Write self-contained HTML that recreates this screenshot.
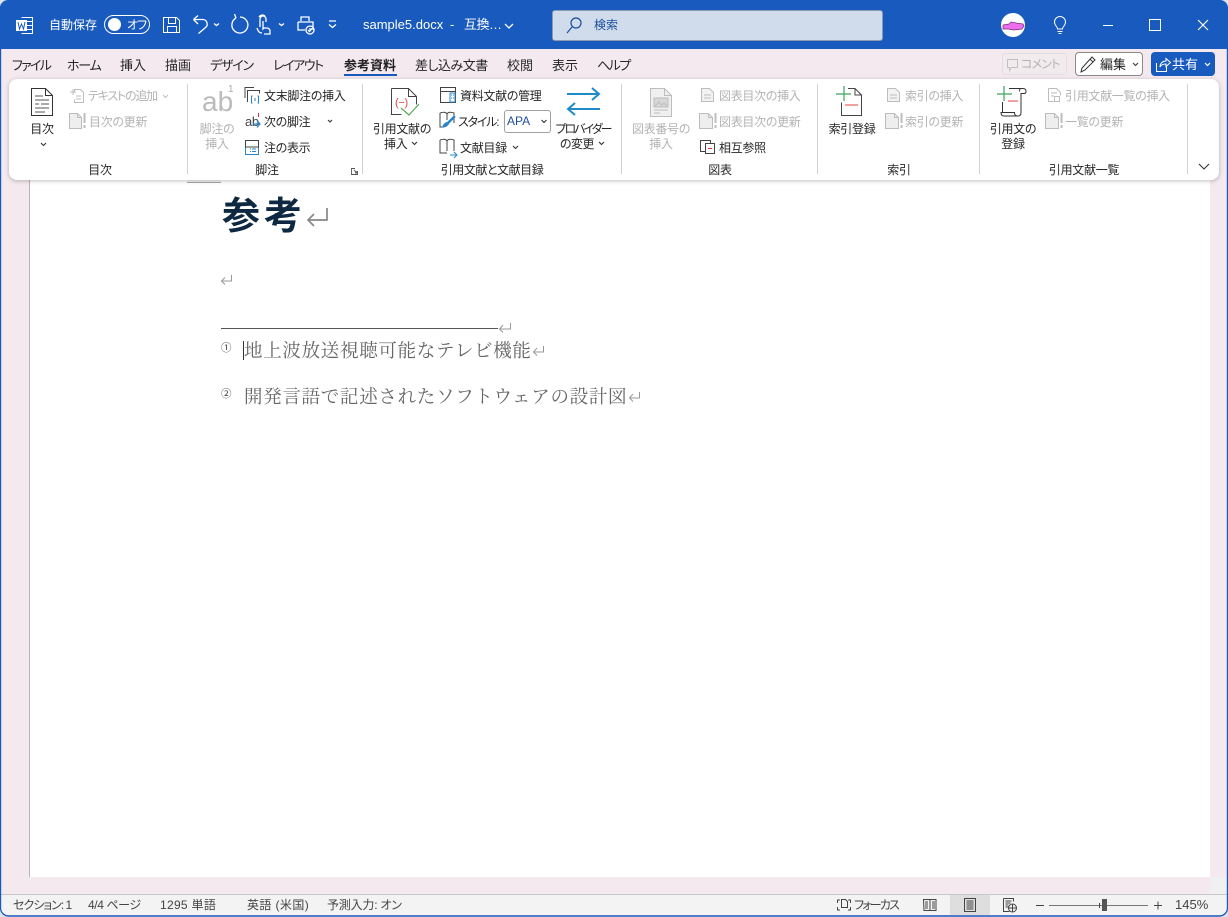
<!DOCTYPE html>
<html lang="ja"><head><meta charset="utf-8"><title>sample5.docx</title>
<style>
html,body{margin:0;padding:0;width:1228px;height:917px;overflow:hidden;background:#dfe3e8}
#w{position:absolute;left:0;top:0;width:1228px;height:917px;background:#f3e9ef;border-radius:8px;overflow:hidden;font-family:"Liberation Sans","Noto Sans CJK JP",sans-serif;font-size:12px;color:#262626;font-feature-settings:"palt";letter-spacing:-.3px}
#w div,#w span{position:absolute}
span{white-space:nowrap;line-height:16px}
.c{transform:translateX(-50%)}
.g{color:#b3b3b3}
.tab{font-size:13px;top:58px;letter-spacing:0}
.st{top:897px;font-size:12px;color:#444;letter-spacing:0}
.doc{font-family:"Noto Serif CJK SC","Noto Serif CJK JP",serif;font-size:18.5px;letter-spacing:.7px;color:#666;font-feature-settings:normal;line-height:22px}
svg{position:absolute;left:0;top:0}
</style></head><body>
<div id="w">
<div style="left:0;top:0;width:1228px;height:49px;background:#185abd"></div>
<div style="left:30px;top:180px;width:1180px;height:697px;background:#fff;border-left:1px solid #b9b5b7;margin-left:-1px"></div>
<div style="left:1210px;top:877px;width:18px;height:17px;background:#f0f0f0"></div>
<div style="left:187px;top:176px;width:34px;height:6px;background:#f4f4f4;border-bottom:1px solid #a8a8a8"></div>
<div style="left:9px;top:79px;width:1210px;height:101px;background:#fff;border-radius:8px;box-shadow:0 1px 4px rgba(0,0,0,.25)"></div>
<div style="left:0;top:894px;width:1228px;height:21px;background:#f3f3f3;border-top:1px solid #c8c8c8;box-sizing:border-box"></div>
<div style="left:950px;top:895px;width:40px;height:20px;background:#dedede"></div>
<div style="left:552px;top:10px;width:331px;height:31px;box-sizing:border-box;background:#d0dcec;border:1px solid #8c9ab0;border-radius:3px"></div>
<div style="left:104px;top:15px;width:46px;height:19px;box-sizing:border-box;border:1px solid #fff;border-radius:10px"></div>
<div style="left:108px;top:18px;width:13px;height:13px;background:#fff;border-radius:50%"></div>
<div style="left:1002px;top:53px;width:65px;height:22px;box-sizing:border-box;background:#f1ebee;border:1px solid #e3dde0;border-radius:3px"></div>
<div style="left:1075px;top:52px;width:68px;height:24px;box-sizing:border-box;background:#fff;border:1px solid #8a8a8a;border-radius:4px"></div>
<div style="left:1151px;top:52px;width:64px;height:24px;background:#185abd;border-radius:4px"></div>
<div style="left:344px;top:74px;width:53px;height:2px;background:#185abd"></div>
<div style="left:504px;top:110px;width:47px;height:23px;box-sizing:border-box;background:#fff;border:1px solid #a0a0a0;border-radius:3px"></div>
<div style="left:221px;top:328px;width:277px;height:1px;background:#555"></div>
<div style="left:243px;top:341px;width:1px;height:19px;background:#333"></div>

<!-- title bar -->
<span style="left:49px;top:17px;color:#fff;letter-spacing:0">自動保存</span>
<span style="left:127px;top:17px;color:#fff;letter-spacing:-1px">オフ</span>
<span style="left:363px;top:17px;color:#fff;font-size:13px;font-feature-settings:normal;letter-spacing:0">sample5.docx</span>
<span style="left:450px;top:17px;color:#fff;font-size:13px;letter-spacing:0">-</span>
<span style="left:464px;top:17px;color:#fff;font-size:13px;font-feature-settings:normal;letter-spacing:-.5px">互換…</span>
<span style="left:594px;top:17px;color:#1a4e9c;letter-spacing:0">検索</span>
<!-- tabs -->
<span class="tab" style="left:12px;letter-spacing:-1.7px">ファイル</span>
<span class="tab" style="left:67px;letter-spacing:-1.2px">ホーム</span>
<span class="tab" style="left:120px">挿入</span>
<span class="tab" style="left:165px">描画</span>
<span class="tab" style="left:210px;letter-spacing:-1.2px">デザイン</span>
<span class="tab" style="left:273px;letter-spacing:-1.4px">レイアウト</span>
<span class="tab" style="left:344px;font-weight:700;color:#222">参考資料</span>
<span class="tab" style="left:415px;letter-spacing:-.5px">差し込み文書</span>
<span class="tab" style="left:507px">校閲</span>
<span class="tab" style="left:552px">表示</span>
<span class="tab" style="left:597px;letter-spacing:-1.5px">ヘルプ</span>
<span class="g" style="left:1021px;top:56px;letter-spacing:-.8px">コメント</span>
<span style="left:1100px;top:57px;font-size:13px;letter-spacing:0">編集</span>
<span style="left:1172px;top:57px;font-size:13px;color:#fff;letter-spacing:0">共有</span>
<!-- ribbon -->
<span class="c" style="left:42px;top:121px">目次</span>
<span class="g" style="left:88px;top:88px;letter-spacing:-1.2px">テキストの追加</span>
<span class="g" style="left:89px;top:114px">目次の更新</span>
<span class="c" style="left:100px;top:162px">目次</span>
<span class="g" style="left:202px;top:86px;font-size:28px;line-height:32px;font-family:'Liberation Sans',sans-serif;color:#bbb;letter-spacing:0">ab</span>
<span class="g" style="left:228px;top:84px;font-size:10px;line-height:12px;color:#aaa">1</span>
<span class="c g" style="left:217px;top:121px">脚注の</span>
<span class="c g" style="left:217px;top:136px">挿入</span>
<span style="left:264px;top:88px">文末脚注の挿入</span>
<span style="left:264px;top:114px">次の脚注</span>
<span style="left:264px;top:140px">注の表示</span>
<span class="c" style="left:267px;top:162px">脚注</span>
<span class="c" style="left:402px;top:121px">引用文献の</span>
<span style="left:384px;top:136px">挿入</span>
<span style="left:460px;top:88px">資料文献の管理</span>
<span style="left:458px;top:114px;letter-spacing:-1.2px">スタイル:</span>
<span style="left:507px;top:113px;color:#1f4e9c;font-feature-settings:normal;letter-spacing:0">APA</span>
<span style="left:460px;top:140px">文献目録</span>
<span class="c" style="left:583px;top:121px;letter-spacing:-2px">プロバイダー</span>
<span style="left:560px;top:136px;letter-spacing:-.6px">の変更</span>
<span class="c" style="left:492px;top:162px;letter-spacing:-.45px">引用文献と文献目録</span>
<span class="c g" style="left:661px;top:121px">図表番号の</span>
<span class="c g" style="left:661px;top:136px">挿入</span>
<span class="g" style="left:719px;top:88px">図表目次の挿入</span>
<span class="g" style="left:719px;top:114px">図表目次の更新</span>
<span style="left:719px;top:140px">相互参照</span>
<span class="c" style="left:720px;top:162px">図表</span>
<span class="c" style="left:852px;top:121px">索引登録</span>
<span class="g" style="left:905px;top:88px">索引の挿入</span>
<span class="g" style="left:905px;top:114px">索引の更新</span>
<span class="c" style="left:899px;top:162px">索引</span>
<span class="c" style="left:1013px;top:121px">引用文の</span>
<span class="c" style="left:1013px;top:136px">登録</span>
<span class="g" style="left:1065px;top:88px">引用文献一覧の挿入</span>
<span class="g" style="left:1065px;top:114px">一覧の更新</span>
<span class="c" style="left:1084px;top:162px">引用文献一覧</span>
<!-- doc -->
<span style="left:222px;top:191px;font-size:38px;line-height:52px;font-weight:700;color:#0e2841;letter-spacing:4px;font-feature-settings:normal">参考</span>
<span style="left:221px;top:340px;font-size:10.5px;color:#444;font-feature-settings:normal;letter-spacing:0">①</span>
<span style="left:221px;top:386px;font-size:10.5px;color:#444;font-feature-settings:normal;letter-spacing:0">②</span>
<span class="doc" style="left:244px;top:339px">地上波放送視聴可能なテレビ機能</span>
<span class="doc" style="left:244px;top:385px">開発言語で記述されたソフトウェアの設計図</span>
<!-- status -->
<span class="st" style="left:13px;letter-spacing:-1px">セクション: 1</span>
<span class="st" style="left:88px;letter-spacing:-.4px">4/4 ページ</span>
<span class="st" style="left:160px;letter-spacing:.3px">1295 単語</span>
<span class="st" style="left:247px;letter-spacing:.4px">英語 (米国)</span>
<span class="st" style="left:327px;letter-spacing:-.2px">予測入力: オン</span>
<span class="st" style="left:854px;letter-spacing:-1.8px">フォーカス</span>
<span class="st" style="left:1175px;font-size:13px">145%</span>

<svg width="1228" height="917" viewBox="0 0 1228 917" fill="none" stroke-width="1">
<!-- word icon -->
<g stroke="#fff"><path d="M21.500 17.500h11v16h-11"/><path d="M26 21.500h6.500M26 25.500h6.500M26 29.500h6.500"/></g>
<rect x="16" y="20" width="11" height="11" fill="#fff"/><path d="M18 22l1.500 7 2-5 2 5 1.500-7" stroke="#185abd"/>
<!-- save -->
<g stroke="#fff"><path d="M163.500 17.500h13l3 3v12h-16z"/><path d="M168.500 18v5.500h7V18M167.500 32v-5.500h9V32"/></g>
<!-- undo -->
<g stroke="#fff" stroke-width="1.300"><path d="M193.500 19.500h9a4.500 4.500 0 0 1 3 8l-7 6M193.500 19.500l4.500-4M193.500 19.500l4.500 4.500"/><path d="M214 23.500l2.500 2 2.500-2M279 23.500l2.500 2 2.500-2"/>
<path d="M236 18a8 8 0 1 0 4-1M236 18l-1.500-4"/>
<path d="M260 27v-8a3 3 0 0 1 6 0v3M262 33c-3 0-4-2-5-5M263 21v8l1-1h3a3 3 0 0 1 3 3v3h-6M259 17a4 4 0 0 1 6-1"/>
<path d="M301 21v-4h8v4M298 22h15v7h-4M298 22v8h6M302 30h3"/><circle cx="310" cy="30" r="4"/><path d="M308 30l1.500 1.500 2.500-3"/>
<path d="M329 21h7M329 24.500l3.500 3 3.500-3"/>
<path d="M505 24l4 4 4-4"/></g>
<!-- search -->
<g stroke="#1a4e9c" stroke-width="1.200"><circle cx="576" cy="23" r="5"/><path d="M572 27l-5 6"/></g>
<!-- avatar -->
<circle cx="1013" cy="25" r="12" fill="#fff"/>
<path d="M1003 25l6-1 2-2 5 1 7 1 1 2-2 3-8 1-6-1-5 0z" fill="#ee6fee" stroke="#7a2a7a" stroke-width=".7"/>
<!-- bulb etc -->
<g stroke="#fff"><path d="M1057.500 29c0-2.500-3-3.500-3-7a5.500 5.500 0 0 1 11 0c0 3.500-3 4.500-3 7zM1057.500 31.500h5M1058.500 33.500h3"/>
<path d="M1103 25.500h10"/><rect x="1149.500" y="19.500" width="11" height="11"/><path d="M1198 20l10 10M1208 20l-10 10" stroke-width="1.200"/></g>
<!-- comment/edit/share -->
<path d="M1007.500 59.500h10v8h-6l-2 3v-3h-2z" stroke="#c0c0c0"/>
<path d="M1081 72l1-4 10-11 3 3-10 10z" stroke="#333"/><path d="M1090 59l3 3" stroke="#333"/>
<g stroke="#333"><path d="M1133 63l2.500 2.500 2.500-2.500"/></g>
<g stroke="#fff"><path d="M1156.500 63v8.500h10V66M1160 67c0-4 3-6 6-6v-2.500l4.500 4-4.500 4V64c-3 0-5 1-6 3z"/><path d="M1205 63l2.500 2.500 2.500-2.500" stroke-width="1.200"/></g>
<!-- separators -->
<g stroke="#d2d2d2"><path d="M187.500 84v90M362.500 84v90M621.500 84v90M817.500 84v90M979.500 84v90M1187.500 84v90"/></g>
<!-- toc -->
<g stroke="#333"><path d="M31.500 88.500h14l7 7v20h-21zM45.500 88.500v7h7"/><path d="M35 96h8M35 100h14M35 104h4M41 104h8M35 108h14M35 112h10" stroke="#555"/></g>
<path d="M41 143l2.500 2.500 2.500-2.500" stroke="#333" stroke-width="1.100"/>
<g stroke="#bdbdbd"><path d="M74.500 91.500v-2h6l3 3v10h-9v-3M70 92h6M73 89v6M76 96h5M76 99h5"/><path d="M69.500 113.500h8l4 4v11h-12z" fill="#eee"/><path d="M77.500 113.500v4h4"/><path d="M84.500 113v10M84.500 125v3" stroke-width="2"/><path d="M163 95l2.500 2.500 2.500-2.500"/></g>
<!-- footnote icons -->
<path d="M245 98V87.500h9M247.500 102V90.500h12v3" stroke="#444"/><path d="M252.500 96h-1v7h1M257.500 96h1v7h-1M255 98v3" stroke="#2a85c9"/>
<text x="245" y="126" font-size="13" fill="#444" font-family="Liberation Sans">ab</text>
<path d="M258.500 113v4" stroke="#d33"/><path d="M253 124h6M257 120.500l3 3.500-3 3.500" stroke="#2a85c9" stroke-width="1.200"/>
<path d="M328 120l2 2 2-2" stroke="#333" stroke-width="1.100"/>
<g stroke="#2a85c9"><path d="M245.500 147v7.500h13V147"/></g><path d="M245.500 147v-6.500h13V147M245 147h14" stroke="#444"/><path d="M250 149h1M252 149h4M250 151.500h1M252 151.500h4" stroke="#2a85c9"/>
<path d="M355 168.500h-3.500v6h6V171M354 170l3 3M355 173h2v-2" stroke="#555" stroke-width=".9"/>
<!-- citation -->
<path d="M391.500 88.500h17l8 8v8M391.500 88.500v26h10M408.500 88.500v8h8" stroke="#444"/>
<text x="395" y="106" font-size="11" fill="#e04444" font-family="Liberation Sans">(−)</text>
<path d="M401 108l8 7 10-11" stroke="#5aa85a" stroke-width="1.200"/>
<path d="M412 142l2.500 2.500 2.500-2.500M513 146l2.500 2.500 2.500-2.500M541.500 120l2.500 2.500 2.500-2.500M599 142l2.500 2.500 2.500-2.500" stroke="#333" stroke-width="1.100"/>
<path d="M440.500 102.500v-15h15v15zM440.500 91.500h15" stroke="#444"/><path d="M450 93h5v9h-5zM451 95h1M453 95h1M451 98h1M453 98h1" stroke="#2a85c9"/>
<path d="M440 113c3-1 6-1 7 1 1-2 4-2 7-1v10M440 113v14h4M447 114v6" stroke="#444"/><path d="M443 127c0-3 3-4 5-5l6-6 1 1-6 6c-1 2-3 4-6 4z" fill="#2a85c9" stroke="#2a85c9"/>
<path d="M440 140c3-1 6-1 7 1 1-2 4-2 7-1v11M440 140v13h7M447 141v10" stroke="#444"/><path d="M450 155h7M454 152l3 3-3 3" stroke="#2a85c9"/>
<g stroke="#2089c9" stroke-width="2"><path d="M567 94h32M592 88l7 6-7 6M600 109h-32M575 103l-7 6 7 6"/></g>
<!-- figure -->
<g stroke="#bdbdbd"><path d="M650.500 88.500h14l7 7v21h-21z" fill="#f0f0f0"/><path d="M664.500 88.500v7h7"/><path d="M654 98h14v9h-14z" fill="#d8d8d8"/><path d="M655 106l4-4 3 3 2-2 3 3"/><path d="M654 110h14M654 113h6"/>
<path d="M701.500 88.500h8l4 4v9h-12z" fill="#f2f2f2"/><path d="M704 95h7M704 98h7"/><path d="M699.500 113.500h9l4 4v11h-13z" fill="#eee"/><path d="M708.500 113.500v4h4"/><path d="M715.500 113v10M715.500 125v3" stroke-width="2"/></g>
<path d="M705 151.500h-4.500v-11h10v3" stroke="#444"/><rect x="705.500" y="143.500" width="9" height="10" fill="#fff" stroke="#444"/><path d="M708 148.500h4" stroke="#d33"/>
<!-- index -->
<path d="M848 88.500h7l6.500 6.500v20.500h-20v-13M855 88.500v6.500h6.500" stroke="#444"/><path d="M836 94h15M844 86v15" stroke="#3ba55d" stroke-width="1.200"/><path d="M845 105h13" stroke="#e04444"/>
<g stroke="#bdbdbd"><path d="M887.500 88.500h8l4 4v9h-12z" fill="#f2f2f2"/><path d="M890 95h7M890 98h7"/><path d="M885.500 113.500h9l4 4v11h-13z" fill="#eee"/><path d="M894.500 113.500v4h4"/><path d="M901.500 113v10M901.500 125v3" stroke-width="2"/></g>
<!-- cite entry -->
<path d="M1009 88.500h14c2 0 3 1 3 3s-1 2-3 2h-2v19c0 2-1 3.500-3 3.500h-14c-2 0-3-1-3-3.500h3M1002.500 102v10.500h12c0 2 1 3.500 3 3.500M1021 88.500c-1 0-1.500 1-1.500 3" stroke="#333"/>
<path d="M997 94h15M1004 86v15" stroke="#3ba55d" stroke-width="1.200"/><path d="M1008 101h10" stroke="#e04444"/>
<g stroke="#bdbdbd"><path d="M1048.500 88.500h8l4 4v3M1048.500 88.500v13h5M1051 93h6M1051 96h3"/><rect x="1054.500" y="96.500" width="5" height="5"/>
<path d="M1045.500 113.500h9l4 4v11h-13z" fill="#eee"/><path d="M1054.500 113.500v4h4"/><path d="M1061.500 113v10M1061.500 125v3" stroke-width="2"/></g>
<path d="M1199 164l5 5 5-5" stroke="#333" stroke-width="1.100"/>
<!-- para marks -->
<path d="M327 208v12h-19M314 214l-6 6 6 6" stroke="#888" stroke-width="1.700"/>
<path d="M231.500 275v6h-10M225 277.500l-3.500 3.500 3.500 3.500" stroke="#999"/>
<path d="M510.500 323v6h-11M503 325l-3.500 4 3.500 3.500" stroke="#999"/>
<path d="M543.500 346v6h-10M537 348l-3.500 4 3.500 3.500" stroke="#999"/>
<path d="M639.500 392v6h-10M633 394l-3.500 4 3.500 3.500" stroke="#999"/>
<!-- status icons -->
<g stroke="#444"><path d="M840 900h-2.500v3M848 900h2.500v3M840 910h-2.500v-3M848 910h2.500v-3"/><path d="M841.500 899.500h4l2 2v6h-6z"/>
<path d="M923.500 899.500h6l.5 1 .5-1h5.500v11h-12zM930 900v10M925 902h3M925 904h3M925 906h3M925 908h3M932 902h3M932 904h3M932 906h3M932 908h3"/>
<path d="M964.500 898.500h11v13h-11zM966.500 901h7M966.500 903h7M966.500 905h7M966.500 907h7M966.500 909h7"/>
<path d="M1003.500 898.500h10v3M1003.500 898.500v13h6M1005.500 901h6M1005.500 903h5M1005.500 905h3M1005.500 907h3"/><circle cx="1012.500" cy="908" r="4"/><path d="M1008.500 908h8M1012.500 904v8"/>
<path d="M1036 905.500h8"/><path d="M1049 905.500h99" stroke="#777"/><path d="M1099.500 903v5"/><path d="M1154 905.500h8M1158 901.500v8"/></g>
<rect x="1102" y="899" width="5" height="12" fill="#555"/>
<!-- bottom/left border -->
<path d="M.5 0V908a8 8 0 0 0 8 8H1219.500a8 8 0 0 0 8-8V40" stroke="#185abd" stroke-width="1.400"/>
</svg>
</div>
</body></html>
